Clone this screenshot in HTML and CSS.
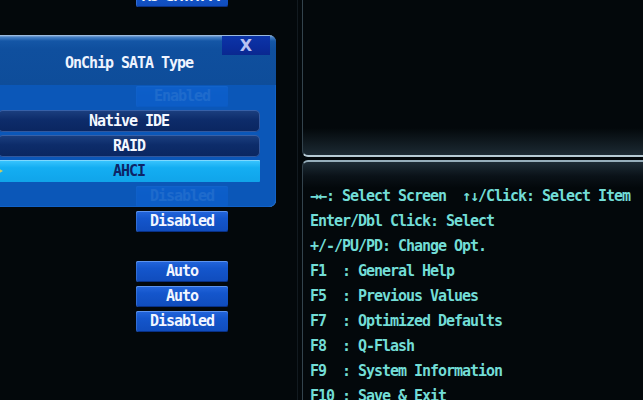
FILE: index.html
```html
<!DOCTYPE html>
<html>
<head>
<meta charset="utf-8">
<link rel="stylesheet" href="styles.css">
</head>
<body>
<div class="screen">
  <div class="left">
    <div class="rows">
      <div class="row"><div class="btn">As SATA...</div></div>
      <div class="row"></div>
      <div class="row"></div>
      <div class="row"></div>
      <div class="row"><div class="btn">Enabled</div></div>
      <div class="row"></div>
      <div class="row"></div>
      <div class="row"></div>
      <div class="row"><div class="btn">Disabled</div></div>
      <div class="row"><div class="btn">Disabled</div></div>
      <div class="row"></div>
      <div class="row"><div class="btn">Auto</div></div>
      <div class="row"><div class="btn">Auto</div></div>
      <div class="row"><div class="btn">Disabled</div></div>
    </div>
    <div class="dialog">
      <div class="dlg-title">OnChip SATA Type</div>
      <div class="dlg-close">X</div>
      <div class="dlg-body">
        <div class="opt">Native IDE</div>
        <div class="opt">RAID</div>
        <div class="opt sel"><span class="cursor"></span>AHCI</div>
      </div>
    </div>
  </div>
  <div class="right">
    <div class="panel-top"></div>
    <div class="panel-bottom">
      <div class="help">→←: Select Screen  ↑↓/Click: Select Item</div>
      <div class="help">Enter/Dbl Click: Select</div>
      <div class="help">+/-/PU/PD: Change Opt.</div>
      <div class="help">F1  : General Help</div>
      <div class="help">F5  : Previous Values</div>
      <div class="help">F7  : Optimized Defaults</div>
      <div class="help">F8  : Q-Flash</div>
      <div class="help">F9  : System Information</div>
      <div class="help">F10 : Save &amp; Exit</div>
    </div>
  </div>
</div>
</body>
</html>
```
FILE: styles.css
```css
* { box-sizing: border-box; margin: 0; padding: 0; }
html, body {
  width: 643px;
  height: 400px;
  overflow: hidden;
  background: #03080b;
}
body {
  font-family: "DejaVu Sans Mono", "Liberation Mono", monospace;
  font-weight: bold;
  font-size: 15px;
  letter-spacing: -1.03px;
}
.screen {
  display: flex;
  gap: 4px;
  height: 400px;
}
.left {
  position: relative;
  flex: none;
  width: 298px;
  border-right: 1px solid #121a20;
}
.rows {
  display: flex;
  flex-direction: column;
  margin-top: -14px;
}
.row {
  height: 25px;
  padding-left: 136px;
}
.btn {
  width: 92px;
  height: 21px;
  line-height: 21px;
  text-align: center;
  color: #f2f6ff;
  background: linear-gradient(#2466dc, #1456cc 35%, #104cbc);
  border-radius: 2px;
  box-shadow: inset 0 1px 0 rgba(140, 185, 255, 0.55), inset 1px 0 0 rgba(110, 160, 240, 0.35), inset 0 -1px 0 rgba(0, 20, 80, 0.5);
}
.dialog {
  position: absolute;
  left: -18px;
  top: 35px;
  width: 294px;
  height: 172px;
  display: flex;
  flex-direction: column;
  border-radius: 0 7px 7px 0;
  overflow: hidden;
  box-shadow: inset -1px 0 0 rgba(120, 180, 250, 0.7), inset 0 -1px 0 rgba(90, 165, 245, 0.8);
}
.dlg-title {
  height: 50px;
  flex: none;
  padding-top: 18px;
  line-height: 20px;
  text-align: center;
  color: #eef4ff;
  background: linear-gradient(#b4cce6 0, #4a82c6 2px, #1456a6 6px, #0f4f9e 14px, #0e4d9a 100%);
}
.dlg-close {
  position: absolute;
  right: 6px;
  top: 1px;
  width: 48px;
  height: 19px;
  line-height: 19px;
  text-align: center;
  font-family: "DejaVu Sans", sans-serif;
  font-size: 16px;
  letter-spacing: 0;
  color: #b8c2f2;
  background: linear-gradient(#0c34a8, #0a2c9c 60%, #0a2890);
}
.dlg-body {
  flex: 1;
  display: flex;
  flex-direction: column;
  gap: 3px;
  padding: 25px 0 0 16px;
  background: rgba(12, 94, 200, 0.92);
}
.opt {
  position: relative;
  width: 262px;
  height: 22px;
  line-height: 22px;
  text-align: center;
  color: #f4f8ff;
  border-radius: 5px;
  background: linear-gradient(#1c4080, #0d2c6a 45%, #0a2660);
  box-shadow: inset 0 0 0 1px rgba(70, 115, 190, 0.65);
}
.opt.sel {
  border-radius: 1px;
  color: #0e2466;
  background: linear-gradient(#3cc6ff, #14aef2 35%, #10a4ea);
  box-shadow: inset 0 1px 0 rgba(170, 230, 255, 0.6);
}
.cursor {
  position: absolute;
  left: 0;
  top: 8px;
  width: 0;
  height: 0;
  border-top: 3px solid transparent;
  border-bottom: 3px solid transparent;
  border-left: 5px solid #c8cc66;
}
.right {
  flex: 1;
  display: flex;
  flex-direction: column;
  gap: 3px;
}
.panel-top {
  height: 157px;
  flex: none;
  border-left: 1px solid #33434d;
  border-bottom: 2px solid #b6cad4;
  border-bottom-left-radius: 6px;
  background: linear-gradient(#03080b 0, #03080b 128px, #1c2a33 155px);
}
.panel-bottom {
  flex: 1;
  border-left: 1px solid #33434d;
  border-top: 2px solid #96aebb;
  border-top-left-radius: 6px;
  padding: 22px 0 0 7px;
  background: linear-gradient(#1e2c36 0, #0a1218 14px, #03080b 26px);
  color: #72ddd6;
  line-height: 25px;
}
.help {
  white-space: pre;
}
```
